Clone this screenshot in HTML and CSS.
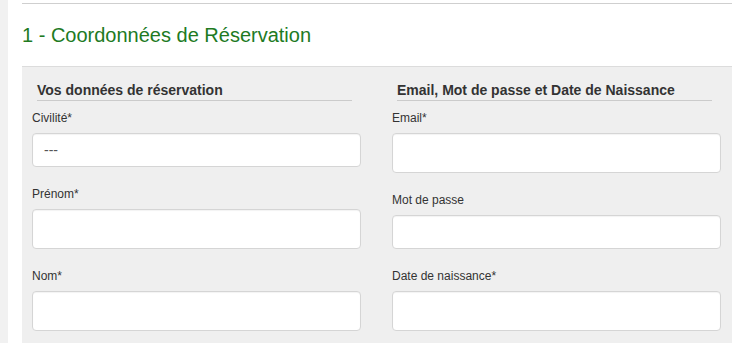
FILE: index.html
```html
<!DOCTYPE html>
<html lang="fr">
<head>
  <meta charset="UTF-8">
  <title>Coordonnées de Réservation</title>
  <meta name="viewport" content="width=device-width, initial-scale=1.0">
  <link rel="stylesheet" href="styles.css">
</head>
<body>
  <div class="page">
    <hr class="rule">
    <h2 class="step-title">1 - Coordonnées de Réservation</h2>

    <form class="booking" id="bookingForm">
      <div class="col">
        <h3 class="col-title">Vos données de réservation</h3>

        <div class="field">
          <label for="civilite">Civilité*</label>
          <select id="civilite" class="ctrl short">
            <option>---</option>
            <option>M.</option>
            <option>Mme</option>
          </select>
        </div>

        <div class="field">
          <label for="prenom">Prénom*</label>
          <input type="text" id="prenom" class="ctrl">
        </div>

        <div class="field">
          <label for="nom">Nom*</label>
          <input type="text" id="nom" class="ctrl">
        </div>
      </div>

      <div class="col">
        <h3 class="col-title">Email, Mot de passe et Date de Naissance</h3>

        <div class="field">
          <label for="email">Email*</label>
          <input type="email" id="email" class="ctrl">
        </div>

        <div class="field">
          <label for="password">Mot de passe</label>
          <input type="password" id="password" class="ctrl short">
        </div>

        <div class="field">
          <label for="naissance">Date de naissance*</label>
          <input type="text" id="naissance" class="ctrl">
        </div>
      </div>
    </form>
  </div>
</body>
</html>
```

FILE: styles.css
```css
body {
  margin: 0;
  background: #f1f1f1;
  font-family: "Liberation Sans", Arial, sans-serif;
  color: #333;
}

.page {
  margin-left: 8px;
  background: #fff;
  min-height: 100vh;
  padding: 3px 6px 0 14px;
}

.rule {
  margin: 0;
  border: none;
  border-top: 1px solid #cfcfcf;
}

.step-title {
  margin: 20px 0;
  font-size: 20px;
  line-height: 22px;
  font-weight: normal;
  color: #217a1f;
}

.booking {
  display: grid;
  grid-template-columns: 1fr 1fr;
  column-gap: 31px;
  padding: 15px 11px 20px 10px;
  background: #efefef;
  border-top: 1px solid #dcdcdc;
}

.col-title {
  margin: 0 9px 9px 5px;
  padding-bottom: 2px;
  font-size: 14px;
  line-height: 16px;
  font-weight: bold;
  color: #333;
  border-bottom: 1px solid #cbcbcb;
}

.field {
  margin-bottom: 19px;
}

.field label {
  display: block;
  margin-bottom: 6px;
  font-size: 12px;
  line-height: 17px;
  color: #333;
}

.ctrl {
  display: block;
  box-sizing: border-box;
  width: 100%;
  height: 40px;
  padding: 6px 11px;
  font-family: inherit;
  font-size: 14px;
  color: #555;
  background: #fff;
  border: 1px solid #d5d5d5;
  border-radius: 4px;
  box-shadow: inset 0 1px 1px rgba(0, 0, 0, 0.05);
  appearance: none;
  -webkit-appearance: none;
}

.ctrl.short {
  height: 34px;
}
```
